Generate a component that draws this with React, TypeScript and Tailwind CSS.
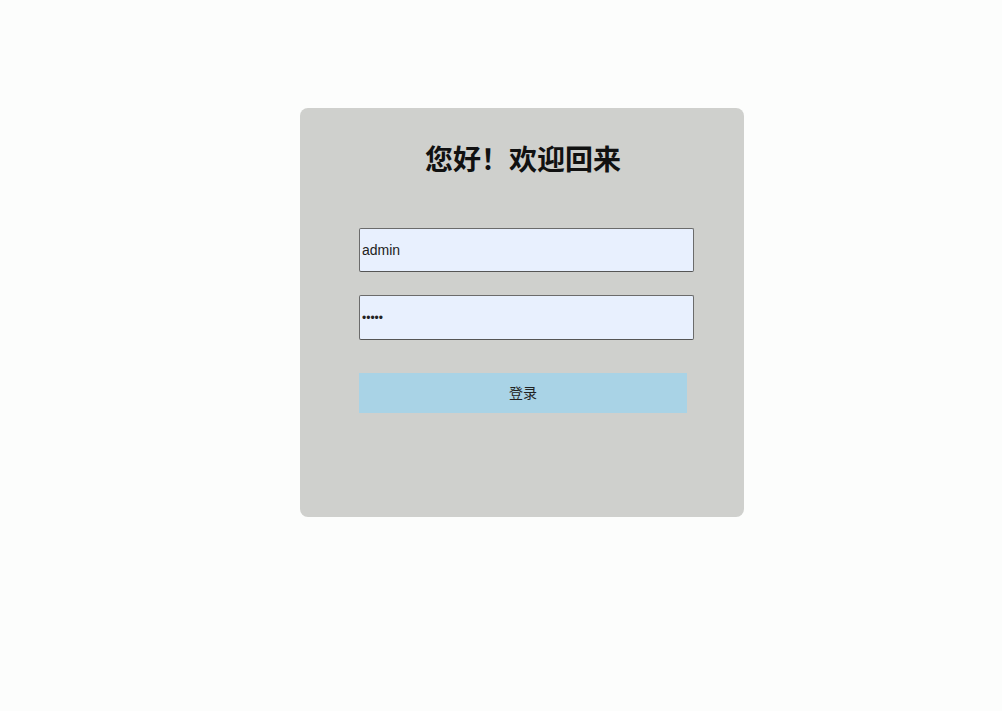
import React from "react";

export default function App() {
  return (
    <div
      className="w-[1002px] h-[711px] bg-[#fcfdfc] pt-[108px] pl-[300px]"
      style={{ fontFamily: '"Liberation Sans", "Noto Sans CJK SC", sans-serif' }}
    >
      <div className="w-[444px] h-[409px] bg-[#cfd0cd] rounded-[8px] pt-[35px] pl-[59px]">
        <h1 className="w-[328px] text-center text-[28px] font-bold text-[#111] leading-[36px]">
          您好！欢迎回来
        </h1>
        <div className="mt-[49px] flex flex-col gap-[23px]">
          <input
            readOnly
            value="admin"
            className="w-[335px] h-[44px] bg-[#e8f0fe] border border-[#6b6b6b] border-b-[#555] rounded-[2px] px-[2px] text-[14px] text-[#222] outline-none"
          />
          <input
            readOnly
            type="password"
            value="admin"
            className="w-[335px] h-[45px] bg-[#e8f0fe] border border-[#6b6b6b] border-b-[#555] rounded-[2px] px-[2px] text-[12px] text-[#222] outline-none"
          />
        </div>
        <button className="mt-[33px] w-[328px] h-[40px] bg-[#a9d3e6] text-[14px] text-[#222] flex items-center justify-center">
          登录
        </button>
      </div>
    </div>
  );
}
